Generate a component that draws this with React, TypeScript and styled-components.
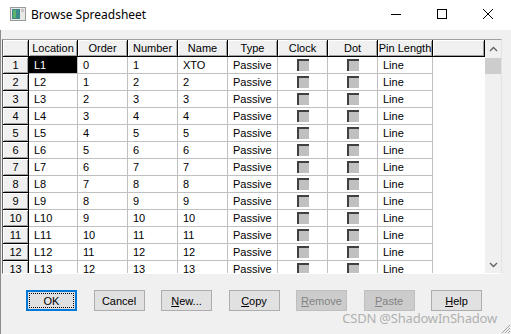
import styled, { createGlobalStyle } from "styled-components";

const GlobalStyle = createGlobalStyle`
  html, body {
    margin: 0;
    padding: 0;
    background: #f0f0f0;
  }
  * {
    box-sizing: border-box;
  }
`;

const COLS = "26px 49px 50px 50px 50px 50px 50px 50px 55px 1fr";

const headers = ["Location", "Order", "Number", "Name", "Type", "Clock", "Dot", "Pin Length"];

const rows = Array.from({ length: 13 }, (_, i) => ({
  location: `L${i + 1}`,
  order: String(i),
  number: String(i + 1),
  name: i === 0 ? "XTO" : String(i + 1),
}));

interface ButtonDef {
  label: string;
  key?: number;
  disabled?: boolean;
  focused?: boolean;
}

const buttons: ButtonDef[] = [
  { label: "OK", focused: true },
  { label: "Cancel" },
  { label: "New...", key: 0 },
  { label: "Copy", key: 0 },
  { label: "Remove", key: 0, disabled: true },
  { label: "Paste", key: 0, disabled: true },
  { label: "Help", key: 0 },
];

export default function App() {
  return (
    <Window>
      <GlobalStyle />
      <TitleBar>
        <AppIcon width="16" height="14" viewBox="0 0 16 14">
          <rect x="0.5" y="0.5" width="15" height="13" fill="#e8e8e8" stroke="#9a9a9a" />
          <rect x="2" y="2" width="8" height="10" fill="#3d8a8a" />
          <rect x="3" y="3" width="3" height="8" fill="#5fb06a" />
          <rect x="11" y="2" width="3" height="3" fill="#c8c8c8" />
        </AppIcon>
        <Title>Browse Spreadsheet</Title>
        <Controls>
          <CtrlButton>
            <svg width="12" height="12" viewBox="0 0 12 12">
              <line x1="1" y1="6.5" x2="11" y2="6.5" stroke="#000" />
            </svg>
          </CtrlButton>
          <CtrlButton>
            <svg width="12" height="12" viewBox="0 0 12 12">
              <rect x="1.5" y="1.5" width="9" height="9" fill="none" stroke="#000" />
            </svg>
          </CtrlButton>
          <CtrlButton>
            <svg width="12" height="12" viewBox="0 0 12 12">
              <path d="M1 1 L11 11 M11 1 L1 11" stroke="#000" strokeWidth="1" />
            </svg>
          </CtrlButton>
        </Controls>
      </TitleBar>

      <Body>
        <GridFrame>
          <Table>
            <Row>
              <HeadCell />
              {headers.map((h) => (
                <HeadCell key={h}>{h}</HeadCell>
              ))}
              <HeadCell />
            </Row>
            {rows.map((r, i) => (
              <Row key={r.location}>
                <HeadCell>{i + 1}</HeadCell>
                <Cell $selected={i === 0}>{r.location}</Cell>
                <Cell>{r.order}</Cell>
                <Cell>{r.number}</Cell>
                <Cell>{r.name}</Cell>
                <Cell>Passive</Cell>
                <Cell $center>
                  <CheckBox />
                </Cell>
                <Cell $center>
                  <CheckBox />
                </Cell>
                <Cell>Line</Cell>
                <EmptyCell />
              </Row>
            ))}
          </Table>
          <ScrollBar>
            <ArrowBox>
              <svg width="9" height="6" viewBox="0 0 9 6">
                <path d="M1 5 L4.5 1.5 L8 5" fill="none" stroke="#606060" strokeWidth="1.3" />
              </svg>
            </ArrowBox>
            <Track>
              <Thumb />
            </Track>
            <ArrowBox>
              <svg width="9" height="6" viewBox="0 0 9 6">
                <path d="M1 1 L4.5 4.5 L8 1" fill="none" stroke="#606060" strokeWidth="1.3" />
              </svg>
            </ArrowBox>
          </ScrollBar>
        </GridFrame>

        <ButtonRow>
          {buttons.map((b) => (
            <DlgButton key={b.label} $disabled={b.disabled} $focused={b.focused}>
              <ButtonLabel $focused={b.focused}>
                {b.key === undefined ? (
                  b.label
                ) : (
                  <>
                    <u>{b.label[0]}</u>
                    {b.label.slice(1)}
                  </>
                )}
              </ButtonLabel>
            </DlgButton>
          ))}
        </ButtonRow>

        <Watermark>CSDN @ShadowInShadow</Watermark>
        <Grip width="12" height="12" viewBox="0 0 12 12">
          <path d="M11 3 L3 11 M11 6 L6 11 M11 9 L9 11" stroke="#a0a0a0" strokeWidth="1" />
        </Grip>
      </Body>
    </Window>
  );
}

const Window = styled.div`
  width: 511px;
  height: 334px;
  display: flex;
  flex-direction: column;
  overflow: hidden;
  font-family: "Liberation Sans", Arial, sans-serif;
`;

const TitleBar = styled.div`
  height: 30px;
  background: #fff;
  display: flex;
  align-items: center;
  padding-left: 10px;
`;

const AppIcon = styled.svg`
  flex: none;
  margin-top: -2px;
`;

const Title = styled.div`
  margin-left: 5px;
  font-family: "Noto Sans", "Open Sans", sans-serif;
  font-size: 12px;
  color: #000;
  margin-top: -2px;
`;

const Controls = styled.div`
  margin-left: auto;
  display: flex;
  height: 100%;
`;

const CtrlButton = styled.div`
  width: 46px;
  height: 100%;
  display: flex;
  align-items: center;
  justify-content: center;
  padding-bottom: 3px;
`;

const Body = styled.div`
  position: relative;
  flex: 1;
  background: #f0f0f0;
  border-left: 1px solid #8c8c8c;
  padding: 9px 0 0 1px;
`;

const GridFrame = styled.div`
  width: 500px;
  height: 235px;
  display: flex;
  border-top: 1px solid #a0a0a0;
  border-left: 1px solid #696969;
  border-right: 1px solid #e3e3e3;
  border-bottom: 1px solid #fff;
  background: #fff;
`;

const Table = styled.div`
  flex: 1;
  overflow: hidden;
  font-size: 11px;
  color: #000;
`;

const Row = styled.div`
  display: grid;
  grid-template-columns: ${COLS};
  height: 17px;
`;

const HeadCell = styled.div`
  background: #f0f0f0;
  border-right: 1px solid #000;
  border-bottom: 1px solid #000;
  box-shadow: inset 1px 1px #fff, inset -1px -1px #a0a0a0;
  display: flex;
  align-items: center;
  justify-content: center;
  white-space: nowrap;
  overflow: hidden;
  line-height: 1;
`;

const Cell = styled.div<{ $selected?: boolean; $center?: boolean }>`
  border-right: 1px solid #c0c0c0;
  border-bottom: 1px solid #c0c0c0;
  padding-left: 5px;
  display: flex;
  align-items: center;
  justify-content: ${(p) => (p.$center ? "center" : "flex-start")};
  background: ${(p) => (p.$selected ? "#000" : "#fff")};
  color: ${(p) => (p.$selected ? "#fff" : "#000")};
  white-space: nowrap;
  overflow: hidden;
`;

const EmptyCell = styled.div`
  background: #fff;
`;

const CheckBox = styled.div`
  width: 12px;
  height: 12px;
  margin-right: 4px;
  background: #c0c0c0;
  border-top: 2px solid #404040;
  border-left: 2px solid #404040;
`;

const ScrollBar = styled.div`
  width: 16px;
  display: flex;
  flex-direction: column;
  background: #f0f0f0;
`;

const ArrowBox = styled.div`
  height: 17px;
  display: flex;
  align-items: center;
  justify-content: center;
`;

const Track = styled.div`
  flex: 1;
  padding-top: 1px;
`;

const Thumb = styled.div`
  height: 16px;
  background: #cdcdcd;
`;

const ButtonRow = styled.div`
  display: flex;
  gap: 16.5px;
  margin: 16px 0 0 24px;
`;

const DlgButton = styled.div<{ $disabled?: boolean; $focused?: boolean }>`
  width: 51px;
  height: 21px;
  padding: ${(p) => (p.$focused ? "1px" : "2px")};
  background: ${(p) => (p.$disabled ? "#cccccc" : "#e1e1e1")};
  border: ${(p) =>
    p.$focused ? "2px solid #0078d7" : p.$disabled ? "1px solid #bfbfbf" : "1px solid #adadad"};
  color: ${(p) => (p.$disabled ? "#838383" : "#000")};
  font-size: 11px;
  display: flex;
`;

const ButtonLabel = styled.div<{ $focused?: boolean }>`
  flex: 1;
  display: flex;
  align-items: center;
  justify-content: center;
  border: 1px dotted ${(p) => (p.$focused ? "#000" : "transparent")};
`;

const Watermark = styled.div`
  position: absolute;
  right: 14px;
  bottom: 7px;
  font-family: "Noto Sans", "Open Sans", sans-serif;
  font-size: 13px;
  color: #b0b0b0;
  letter-spacing: -0.2px;
`;

const Grip = styled.svg`
  position: absolute;
  right: 0;
  bottom: 0;
`;
